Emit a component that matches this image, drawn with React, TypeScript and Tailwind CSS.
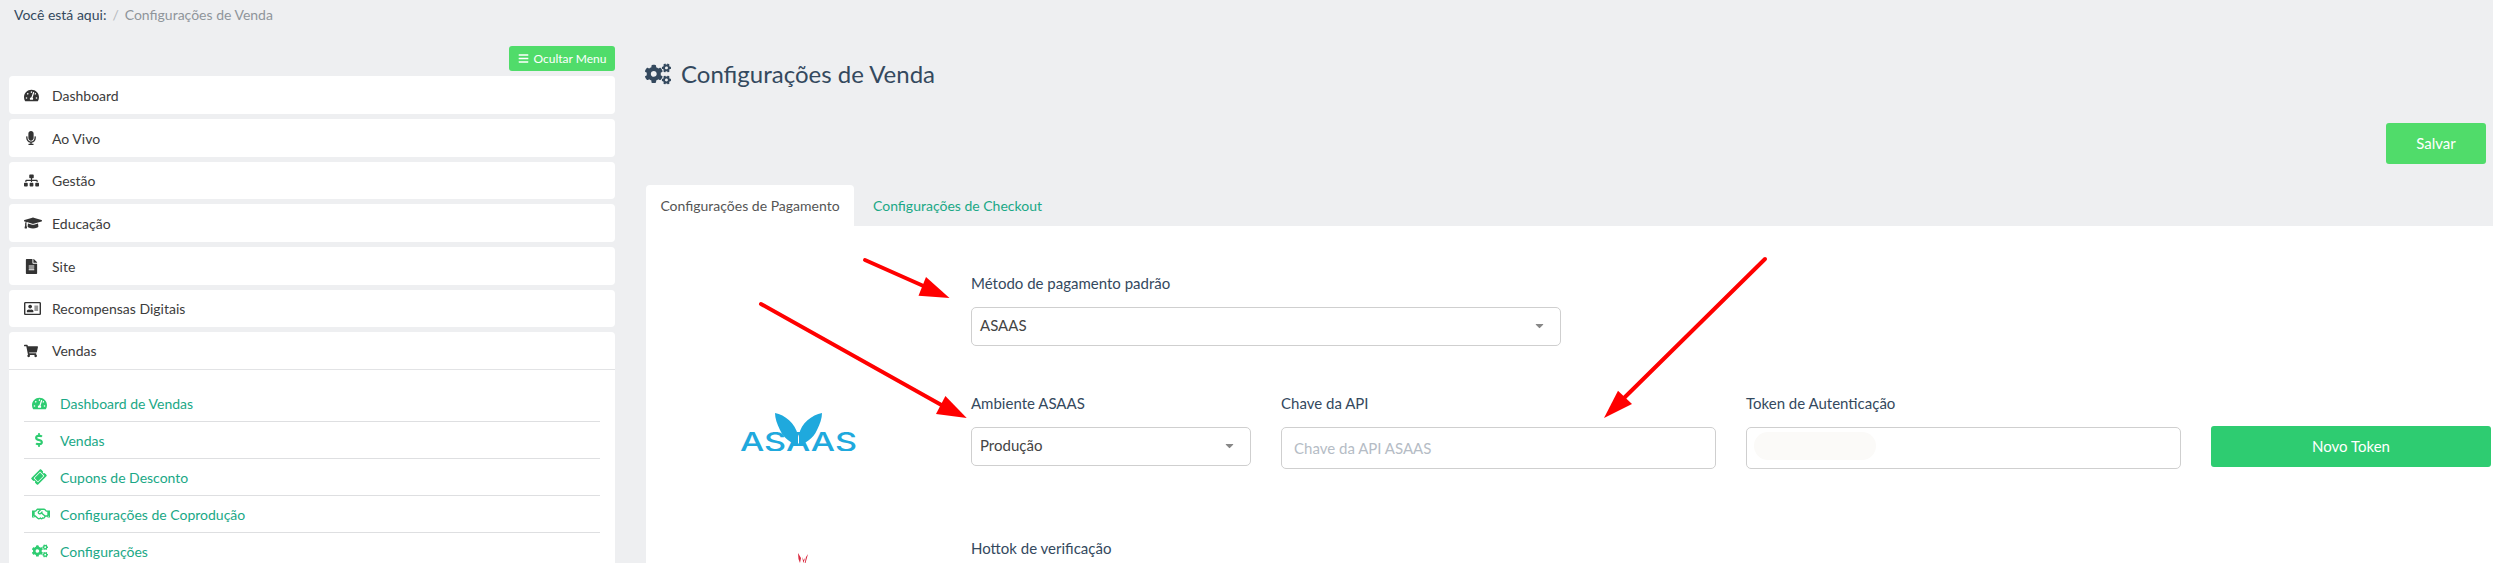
import React from "react";
import {
  FaTachometerAlt, FaMicrophone, FaSitemap, FaGraduationCap, FaFileAlt, FaRegAddressCard,
  FaShoppingCart, FaDollarSign, FaTicketAlt, FaRegHandshake, FaCogs, FaBars, FaCaretDown,
} from "react-icons/fa";

const menu = [
  { label: "Dashboard", icon: FaTachometerAlt, cls: "text-[15px]", h: "h-[38px]" },
  { label: "Ao Vivo", icon: FaMicrophone, cls: "text-[14px]", h: "h-[38px]" },
  { label: "Gestão", icon: FaSitemap, cls: "text-[15px]", h: "h-[37px]" },
  { label: "Educação", icon: FaGraduationCap, cls: "text-[18px]", h: "h-[38px]" },
  { label: "Site", icon: FaFileAlt, cls: "text-[15px]", h: "h-[38px]" },
  { label: "Recompensas Digitais", icon: FaRegAddressCard, cls: "text-[17px]", h: "h-[37px]" },
];

const sub = [
  { label: "Dashboard de Vendas", icon: FaTachometerAlt, cls: "text-[15px]" },
  { label: "Vendas", icon: FaDollarSign, cls: "text-[14px]" },
  { label: "Cupons de Desconto", icon: FaTicketAlt, cls: "text-[14px] -rotate-45" },
  { label: "Configurações de Coprodução", icon: FaRegHandshake, cls: "text-[18px]" },
  { label: "Configurações", icon: FaCogs, cls: "text-[16px]" },
];

function Label({ children }: { children: React.ReactNode }) {
  return <label className="block h-[20px] leading-[20px] text-[15px] text-[#34495e]">{children}</label>;
}

function SelectBox({ value, className }: { value: string; className: string }) {
  return (
    <div className={`flex h-[39px] items-center justify-between rounded-[5px] border border-[#cfcfcf] bg-white pb-[2px] pl-[8px] pr-[14px] text-[15px] text-[#444] ${className}`}>
      <span>{value}</span>
      <FaCaretDown className="text-[13px] text-[#888]" />
    </div>
  );
}

function Field({ label, placeholder, smudge }: { label: string; placeholder?: string; smudge?: boolean }) {
  return (
    <div className="w-[435px] shrink-0">
      <Label>{label}</Label>
      <div className="relative mt-[14px]">
        <input
          placeholder={placeholder}
          className="block h-[42px] w-full rounded-[5px] border border-[#cfcfcf] bg-white px-[12px] text-[15px] text-[#444] outline-none placeholder:text-[#b5bcc5]"
        />
        {smudge && <div className="absolute left-[8px] top-[5px] h-[28px] w-[122px] rounded-full bg-[#fbfaf8]" />}
      </div>
    </div>
  );
}

function AsaasLogo() {
  return (
    <svg width="118" height="38" viewBox="0 0 118 38" className="block">
      <text x="0" y="37.5" fontFamily="Inter, sans-serif" fontSize="26" fontWeight="500" fill="#1fa9dd" textLength="117" lengthAdjust="spacingAndGlyphs">ASAAS</text>
      <path d="M35 0 C45 2 55 10 58 22 L58 33 C52 30 44 26 40 17 C37 11 35 5 35 0 Z" fill="#1fa9dd" />
      <path d="M82 0 C72 2 61 10 59 22 L59 33 C65 30 73 26 77 17 C80 11 82 5 82 0 Z" fill="#1fa9dd" />
    </svg>
  );
}

export default function App() {
  return (
    <div className="relative h-[563px] w-full overflow-hidden bg-[#eeeff1] font-['Lato',sans-serif]">
      <nav className="flex h-[28px] items-center pl-[14px] text-[14px]">
        <span className="text-[#34495e]">Você está aqui:</span>
        <span className="mx-[6px] text-[#b5b9bd]">/</span>
        <span className="text-[#8e959b]">Configurações de Venda</span>
      </nav>

      <div className="flex items-start pt-[18px]">
        <aside className="ml-[9px] w-[606px] shrink-0">
          <div className="flex justify-end">
            <button className="flex h-[25px] w-[106px] items-center justify-center gap-[5px] rounded-[3px] bg-[#50dc6a] text-[12px] text-white">
              <FaBars className="text-[11px]" />
              Ocultar Menu
            </button>
          </div>
          <div className="mt-[5px] flex flex-col gap-[5px]">
            {menu.map((m) => (
              <div key={m.label} className={`flex items-center rounded-[4px] bg-white pl-[15px] text-[14px] text-[#3c3c3c] ${m.h}`}>
                <span className="flex w-[28px] items-center text-[#333]"><m.icon className={m.cls} /></span>
                {m.label}
              </div>
            ))}
            <div className="rounded-[4px] bg-white">
              <div className="flex h-[38px] items-center border-b border-[#e2e3e5] pl-[15px] text-[14px] text-[#3c3c3c]">
                <span className="flex w-[28px] items-center text-[#333]"><FaShoppingCart className="text-[14px]" /></span>
                Vendas
              </div>
              <ul className="mx-[15px] pt-[15px]">
                {sub.map((s) => (
                  <li key={s.label} className="flex h-[37px] items-center border-b border-[#dedfe1] pl-[8px] text-[14px] text-[#1aa886]">
                    <span className="flex w-[28px] items-center text-[#2ecc71]"><s.icon className={s.cls} /></span>
                    {s.label}
                  </li>
                ))}
                <li className="h-[30px]" />
              </ul>
            </div>
          </div>
        </aside>

        <main className="ml-[31px] min-w-0 flex-1">
          <h1 className="flex h-[56px] items-center text-[24px] font-normal text-[#34495e]">
            <FaCogs className="-ml-[1px] mr-[10px] text-[26px]" />
            Configurações de Venda
          </h1>
          <div className="mr-[7px] mt-[21px] flex justify-end">
            <button className="h-[41px] w-[100px] rounded-[3px] bg-[#50dc6a] text-[15px] text-white">Salvar</button>
          </div>
          <div className="mt-[21px] flex h-[41px]">
            <div className="flex w-[208px] items-center justify-center rounded-t-[4px] bg-white text-[14px] text-[#555]">Configurações de Pagamento</div>
            <div className="flex items-center pl-[19px] text-[14px] text-[#1aa886]">Configurações de Checkout</div>
          </div>
          <section className="h-[337px] bg-white pt-[47px]">
            <div className="ml-[325px]">
              <Label>Método de pagamento padrão</Label>
              <SelectBox value="ASAAS" className="mt-[14px] w-[590px]" />
            </div>
            <div className="mt-[47px] flex">
              <div className="w-[325px] shrink-0 pl-[94px] pt-[20px]"><AsaasLogo /></div>
              <div className="w-[280px] shrink-0">
                <Label>Ambiente ASAAS</Label>
                <SelectBox value="Produção" className="mt-[14px]" />
              </div>
              <div className="ml-[30px]"><Field label="Chave da API" placeholder="Chave da API ASAAS" /></div>
              <div className="ml-[30px]"><Field label="Token de Autenticação" smudge /></div>
              <div className="ml-[30px] w-[280px] shrink-0 pt-[33px]">
                <button className="h-[41px] w-full rounded-[3px] bg-[#2ecc71] text-[15px] text-white">Novo Token</button>
              </div>
            </div>
            <div className="mt-[69px] flex">
              <div className="w-[325px] shrink-0 pl-[151px] pt-[15px]">
                <svg width="12" height="12" viewBox="0 0 12 12" className="block">
                  <path d="M1 0 L4 5 L3 10 L1.5 6 Z M5 4 L6.5 10 L8 5 L6.5 7 Z M11 1 L8.5 10 L7.5 11 L9 4 Z" fill="#d9293f" />
                </svg>
              </div>
              <Label>Hottok de verificação</Label>
            </div>
          </section>
        </main>
      </div>

      <svg className="pointer-events-none absolute left-0 top-0" width="2493" height="563" viewBox="0 0 2493 563">
        <g stroke="#ff0000" strokeWidth="4" strokeLinecap="round">
          <line x1="865" y1="260" x2="928" y2="288" />
          <line x1="761" y1="304" x2="945" y2="407" />
          <line x1="1765" y1="259" x2="1622" y2="400" />
        </g>
        <g fill="#ff0000">
          <polygon points="949.5,298 926,277 918.5,295.7" />
          <polygon points="966.7,418 945.4,396 936,414" />
          <polygon points="1604,418 1618,390.7 1632,404" />
        </g>
      </svg>
    </div>
  );
}
